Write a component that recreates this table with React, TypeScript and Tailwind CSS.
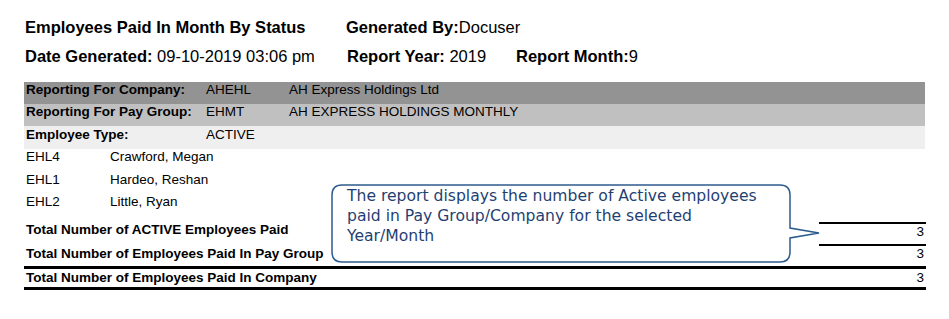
export default function App() {
  return (
    <div className="w-[949px] h-[319px] bg-white relative overflow-hidden text-black font-['Liberation_Sans',Arial,sans-serif]">
      {/* Header */}
      <div className="pt-[13px] pl-[25px] text-[16.5px] leading-[29px]">
        <div className="flex whitespace-nowrap">
          <div className="w-[321px] font-bold">Employees Paid In Month By Status</div>
          <div>
            <span className="font-bold">Generated By:</span>Docuser
          </div>
        </div>
        <div className="flex whitespace-nowrap">
          <div className="w-[321px]">
            <span className="font-bold">Date Generated:</span> 09-10-2019 03:06 pm
          </div>
          <div className="w-[170px] pl-[1px]">
            <span className="font-bold">Report Year:</span> 2019
          </div>
          <div>
            <span className="font-bold">Report Month:</span>9
          </div>
        </div>
      </div>

      {/* Table */}
      <div className="ml-[24px] w-[902px] mt-[11px] text-[13.5px] leading-[15px] whitespace-nowrap">
        <div className="flex h-[22px] w-[901px] bg-[#939393] pl-[2px]">
          <div className="w-[180px] font-bold">Reporting For Company:</div>
          <div className="w-[83px]">AHEHL</div>
          <div>AH Express Holdings Ltd</div>
        </div>
        <div className="flex h-[22px] w-[901px] bg-[#c0c0c0] pl-[2px]">
          <div className="w-[180px] font-bold">Reporting For Pay Group:</div>
          <div className="w-[83px]">EHMT</div>
          <div>AH EXPRESS HOLDINGS MONTHLY</div>
        </div>
        <div className="flex h-[23px] w-[901px] bg-[#efefef] pl-[2px] pt-[1px]">
          <div className="w-[180px] font-bold">Employee Type:</div>
          <div>ACTIVE</div>
        </div>

        {[
          ["EHL4", "Crawford, Megan"],
          ["EHL1", "Hardeo, Reshan"],
          ["EHL2", "Little, Ryan"],
        ].map(([id, name]) => (
          <div key={id} className="flex h-[22.5px] pl-[2px]">
            <div className="w-[84px]">{id}</div>
            <div>{name}</div>
          </div>
        ))}

        <div className="mt-[5.5px] font-bold">
          <div className="flex h-[22px]">
            <div className="w-[795px] pl-[2px]">Total Number of ACTIVE Employees Paid</div>
            <div className="w-[107px] border-t-2 border-black text-right pr-[2px] font-normal">3</div>
          </div>
          <div className="flex h-[21.5px]">
            <div className="w-[795px] pl-[2px] pt-[1.5px]">Total Number of Employees Paid In Pay Group</div>
            <div className="w-[107px] border-t-2 border-black text-right pr-[2px] font-normal">3</div>
          </div>
          <div className="flex h-[24px] border-y-[3px] border-black">
            <div className="w-[795px] pl-[2px] pt-[1px]">Total Number of Employees Paid In Company</div>
            <div className="w-[107px] text-right pr-[2px] pt-[1px] font-normal">3</div>
          </div>
        </div>
      </div>

      {/* Callout */}
      <div className="absolute left-[331px] top-[184px] w-[492px] h-[80px]">
        <svg width="492" height="80" viewBox="0 0 492 80" className="absolute left-0 top-0">
          <path
            d="M 11 1 H 449 Q 459 1 459 11 V 44 L 488 49 L 459 54 V 68 Q 459 78 449 78 H 11 Q 1 78 1 68 V 11 Q 1 1 11 1 Z"
            fill="white"
            stroke="#2e5b8e"
            strokeWidth="1.5"
          />
        </svg>
        <div className="absolute left-[16px] top-[2px] text-[15.6px] leading-[20px] text-[#1f3f73] whitespace-nowrap font-['DejaVu_Sans',Verdana,sans-serif]">
          The report displays the number of Active employees
          <br />
          paid in Pay Group/Company for the selected
          <br />
          Year/Month
        </div>
      </div>
    </div>
  );
}
